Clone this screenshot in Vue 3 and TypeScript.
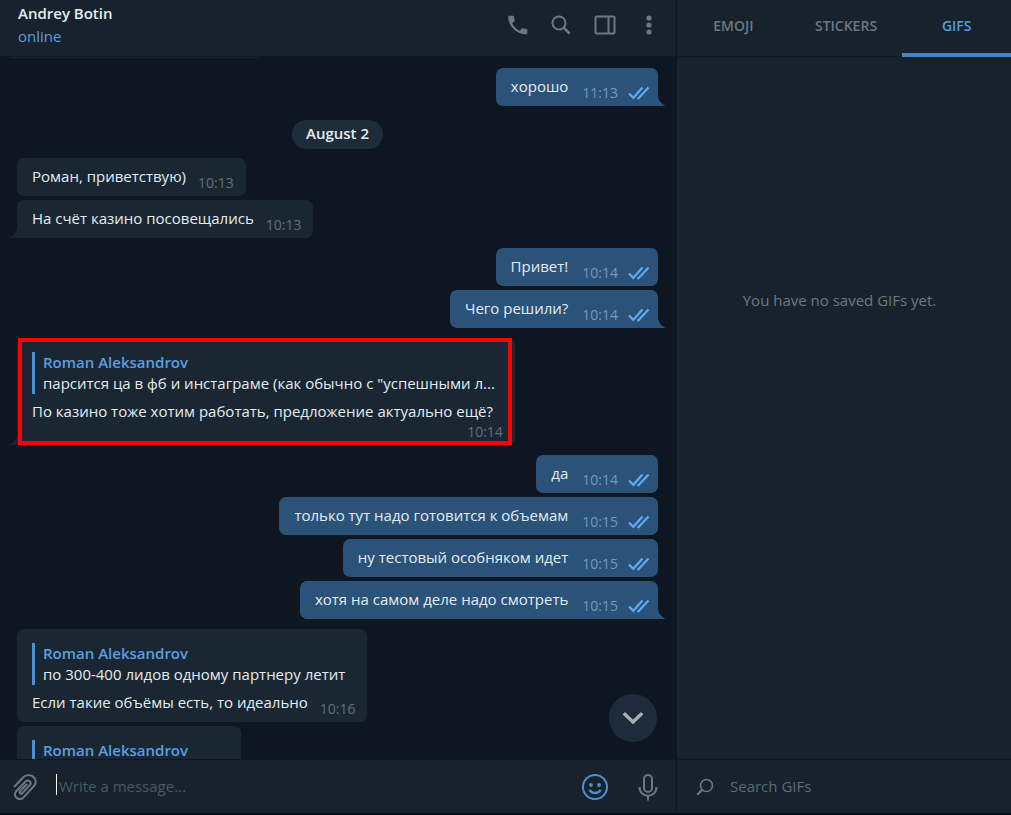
<script setup lang="ts">
import { ref } from 'vue'

interface Message {
  id: number
  text: string
  time: string
  out?: boolean
  tail?: boolean
  quote?: string
  author?: string
  marked?: boolean
  partial?: boolean
  gap?: boolean
}

const messages: Message[] = [
  { id: 2, text: 'Роман, приветствую)', time: '10:13' },
  { id: 3, text: 'На счёт казино посовещались', time: '10:13', tail: true },
  { id: 4, text: 'Привет!', time: '10:14', out: true, gap: true },
  { id: 5, text: 'Чего решили?', time: '10:14', out: true, tail: true },
  {
    id: 6,
    author: 'Roman Aleksandrov',
    quote: 'парсится ца в фб и инстаграме (как обычно с "успешными л...',
    text: 'По казино тоже хотим работать, предложение актуально ещё?',
    time: '10:14',
    tail: true,
    marked: true,
    gap: true,
  },
  { id: 7, text: 'да', time: '10:14', out: true, gap: true },
  { id: 8, text: 'только тут надо готовится к объемам', time: '10:15', out: true },
  { id: 9, text: 'ну тестовый особняком идет', time: '10:15', out: true },
  { id: 10, text: 'хотя на самом деле надо смотреть', time: '10:15', out: true, tail: true },
  {
    id: 11,
    author: 'Roman Aleksandrov',
    quote: 'по 300-400 лидов одному партнеру летит',
    text: 'Если такие объёмы есть, то идеально',
    time: '10:16',
    gap: true,
  },
  { id: 12, author: 'Roman Aleksandrov', quote: '', text: '', time: '', partial: true },
]
const first: Message[] = [{ id: 1, text: 'хорошо', time: '11:13', out: true, tail: true }]
const groups = [
  { date: '', items: first },
  { date: 'August 2', items: messages },
]

const tabs = ['EMOJI', 'STICKERS', 'GIFS']
const active = ref('GIFS')
const draft = ref('')
const search = ref('')
</script>

<template>
  <div class="app">
    <main class="chat">
      <header class="top">
        <div class="peer">
          <h1>Andrey Botin</h1>
          <p>online</p>
        </div>
        <div class="actions">
          <button type="button" aria-label="Call">
            <svg width="20" height="20" viewBox="0 0 20 20"><path fill="currentColor" d="M1.2.7h3.7c.6 0 1 .4 1.100 1 .1 1.200.3 2.300.7 3.400.1.400 0 .8-.3 1.100L4.200 8.400c1.600 3.100 4.300 5.800 7.400 7.400l2.200-2.200c.3-.3.7-.4 1.100-.3 1.100.4 2.200.6 3.400.7.600.1 1 .5 1 1.100v3.200c0 .6-.4 1-1 1C8.500 19.300.2 11 .2 1.700c0-.6.4-1 1-1z" /></svg>
          </button>
          <button type="button" aria-label="Search">
            <svg width="20" height="20" viewBox="0 0 20 20" fill="none" stroke="currentColor"><circle cx="8" cy="8" r="6.500" stroke-width="2" /><path d="M12.700 12.700 18.500 18.500" stroke-width="2.600" /></svg>
          </button>
          <button type="button" aria-label="Toggle side panel">
            <svg width="22" height="20" viewBox="0 0 22 20" fill="none" stroke="currentColor" stroke-width="2"><rect x="1.500" y="1.500" width="19" height="17" rx="1" /><path d="M14.500 2v16" /></svg>
          </button>
          <button type="button" aria-label="Menu">
            <svg width="20" height="20" viewBox="0 0 20 20" fill="currentColor"><circle cx="10" cy="3" r="2.600" /><circle cx="10" cy="10" r="2.600" /><circle cx="10" cy="17" r="2.600" /></svg>
          </button>
        </div>
      </header>

      <section class="history">
        <div class="earlier"></div>
        <div v-for="(g, gi) in groups" :key="gi" class="group">
          <div v-if="g.date" class="date">{{ g.date }}</div>
          <div
            v-for="m in g.items"
            :key="m.id"
            class="bubble"
            :class="{ out: m.out, tail: m.tail, gap: m.gap, wrap: m.marked, partial: m.partial }"
          >
            <blockquote v-if="m.author">
              <strong>{{ m.author }}</strong>
              <span>{{ m.quote }}</span>
            </blockquote>
            <div class="line">
              <p>{{ m.text }}</p>
              <div class="meta">
                <time>{{ m.time }}</time>
                <svg v-if="m.out" class="ticks" width="22" height="14" viewBox="0 0 22 14" fill="none" stroke="currentColor" stroke-width="2.200"><path d="M1 7.500 5.300 11.800 14.500 1.500M9.500 11.500l1 .8L20.500 1.500" /></svg>
              </div>
            </div>
            <svg v-if="m.tail" class="nib" width="8" height="11" viewBox="0 0 8 11"><path fill="currentColor" d="M0 0C0 4.500 2.500 8 7.500 11H0z" /></svg>
            <div v-if="m.marked" class="mark"></div>
          </div>
        </div>
        <button type="button" class="down" aria-label="Scroll to bottom">
          <svg width="22" height="14" viewBox="0 0 22 14" fill="none" stroke="currentColor" stroke-width="3.400"><path d="M1.800 2.200 11 11 20.200 2.200" /></svg>
        </button>
      </section>

      <form class="compose" @submit.prevent>
        <button type="button" class="attach" aria-label="Attach file">
          <svg width="24" height="28" viewBox="0 0 24 28" fill="none" stroke="currentColor" stroke-width="2" stroke-linecap="round"><path d="M1.500 13.500 10 4.500C16-1.500 26 5 21.500 12.500L10.500 24.500C6 28.500-.5 23.500 3 18.500L12.500 8.500C15.500 6 19 9 17 12L9.500 20C8 21.500 5.800 20 7 18.200L13.500 11.500" /></svg>
        </button>
        <span class="caret"></span>
        <input v-model="draft" type="text" aria-label="Message" placeholder="Write a message..." />
        <button type="button" class="smile" aria-label="Emoji">
          <svg width="26" height="26" viewBox="0 0 26 26" fill="none" stroke="currentColor" stroke-width="2"><circle cx="13" cy="13" r="12" /><circle cx="9" cy="11" r="1.900" fill="currentColor" stroke="none" /><circle cx="17" cy="11" r="1.900" fill="currentColor" stroke="none" /><path stroke-width="2.400" d="M7.500 15.800c2.500 4.200 8.500 4.200 11 0" /></svg>
        </button>
        <button type="button" class="mic" aria-label="Record voice message">
          <svg width="20" height="28" viewBox="0 0 20 28" fill="none" stroke="currentColor" stroke-width="2"><rect x="6" y="2" width="8" height="17" rx="4" /><path d="M1.500 14c0 11.500 17 11.500 17 0M10 22.500V27.500" /></svg>
        </button>
      </form>
    </main>

    <aside class="panel">
      <nav class="tabs">
        <button v-for="t in tabs" :key="t" type="button" :class="{ on: t === active }" @click="active = t">{{ t }}</button>
      </nav>
      <div class="empty">You have no saved GIFs yet.</div>
      <label class="find">
        <svg width="18" height="18" viewBox="0 0 18 18" fill="none" stroke="currentColor"><circle cx="10.500" cy="7.500" r="6" stroke-width="1.600" /><path d="M6.200 11.800 1.200 16.800" stroke-width="2.200" /></svg>
        <input v-model="search" type="text" aria-label="Search GIFs" placeholder="Search GIFs" />
      </label>
    </aside>
  </div>
</template>

<style>
body {
  background: #0e1621;
}
</style>

<style scoped>
* {
  box-sizing: border-box;
}
.app {
  display: flex;
  height: 100vh;
  font: 15px/20px "Open Sans", "Noto Sans", sans-serif;
  color: #e4ecf2;
  background: #18222c;
  border-bottom: 2px solid #050b14;
}
h1,
p,
blockquote {
  margin: 0;
}
button {
  display: flex;
  align-items: center;
  justify-content: center;
  padding: 0;
  border: 0;
  background: none;
  color: #6b7883;
  font: inherit;
}
svg {
  display: block;
}
input {
  flex: 1;
  min-width: 0;
  padding: 0 0 2px;
  border: 0;
  outline: 0;
  background: none;
  color: inherit;
  font: inherit;
}
input::placeholder {
  color: #4b5866;
  opacity: 1;
}
.chat {
  flex: 1;
  min-width: 0;
  display: flex;
  flex-direction: column;
  border-right: 1px solid #0f1822;
}
.top {
  display: flex;
  justify-content: space-between;
  height: 57px;
  padding: 2px 17px 0 18px;
  border-bottom: 1px solid #0f1822;
}
.peer h1 {
  font-size: 15px;
  font-weight: 600;
  line-height: 22px;
}
.peer p {
  line-height: 24px;
  color: #5a9fe0;
}
.actions {
  display: flex;
  gap: 23px;
  padding-top: 13px;
  height: 33px;
}
.history {
  position: relative;
  flex: 1;
  min-height: 0;
  overflow: hidden;
  padding: 0 18px 0 17px;
  background: #0e1621;
}
.earlier {
  width: 250px;
  height: 1px;
  margin: 0 0 10px -7px;
  background: #182530;
}
.group {
  display: flex;
  flex-direction: column;
  align-items: flex-start;
  gap: 4px;
}
.date {
  align-self: center;
  height: 29px;
  margin: 14px 0 5px;
  padding: 0 14px;
  border-radius: 15px;
  background: #1e2c3a;
  font-weight: 600;
  line-height: 27px;
}
.bubble {
  position: relative;
  padding-left: 15px;
  border-radius: 7px;
  background: #1a2733;
  color: #1a2733;
}
.bubble.gap {
  margin-top: 6px;
}
.bubble.tail {
  border-bottom-left-radius: 0;
}
.bubble.out {
  align-self: flex-end;
  background: #2b5278;
  color: #2b5278;
}
.bubble.out.tail {
  border-radius: 7px 7px 0 7px;
}
.nib {
  position: absolute;
  bottom: 0;
  right: 100%;
  transform: scaleX(-1);
}
.out .nib {
  right: auto;
  left: 100%;
  transform: none;
}
.line {
  display: flex;
  align-items: flex-end;
  justify-content: space-between;
  gap: 12px;
  padding-right: 12px;
}
.out .line {
  gap: 14px;
  padding-right: 8px;
}
.line p {
  padding: 8px 0 10px;
  color: #e4ecf2;
}
.meta {
  display: flex;
  align-items: center;
  gap: 10px;
  margin-bottom: 3px;
  color: #5f7080;
  font-size: 14px;
}
.out .meta {
  color: #6f9ac4;
}
.ticks {
  color: #5eaaf0;
}
blockquote {
  display: flex;
  flex-direction: column;
  min-height: 42px;
  margin: 14px 20px -1px 0;
  padding-left: 8px;
  border-left: 3px solid #4a90d2;
  line-height: 21px;
  color: #e4ecf2;
}
blockquote strong {
  font-weight: 600;
  color: #5a9fe0;
}
.wrap .line {
  flex-direction: column;
  gap: 0;
}
.wrap .line p {
  align-self: flex-start;
  padding-bottom: 1px;
}
.partial {
  width: 224px;
}
.mark {
  position: absolute;
  inset: 0 3px 0 1px;
  border: 4px solid #fe0000;
}
.down {
  position: absolute;
  right: 19px;
  bottom: 17px;
  width: 48px;
  height: 48px;
  border-radius: 50%;
  background: #1e2b3a;
  color: #a8b0b7;
}
.compose {
  display: flex;
  align-items: center;
  height: 54px;
  padding: 0 18px 0 13px;
  border-top: 1px solid #0f1822;
}
.caret {
  width: 1px;
  height: 21px;
  margin: 0 2px 4px 19px;
  background: #ffffff;
}
.smile {
  margin-right: 30px;
  color: #4a90d2;
}
.panel {
  width: 334px;
  display: flex;
  flex-direction: column;
}
.tabs {
  display: flex;
  height: 57px;
  border-bottom: 1px solid #0f1822;
}
.tabs button {
  flex: 1 0 112px;
  height: 57px;
  padding-bottom: 6px;
  font-size: 14px;
  font-weight: 600;
}
.tabs button.on {
  flex-basis: 108px;
  padding-bottom: 2px;
  border-bottom: 4px solid #4085c5;
  color: #549ddf;
}
.empty {
  flex: 1;
  padding: 233px 9px 0 0;
  text-align: center;
  color: #6b7883;
}
.find {
  display: flex;
  align-items: center;
  gap: 16px;
  height: 54px;
  padding: 0 19px;
  border-top: 1px solid #0f1822;
  color: #6b7883;
}
.find input::placeholder {
  color: #5c6976;
}
</style>
